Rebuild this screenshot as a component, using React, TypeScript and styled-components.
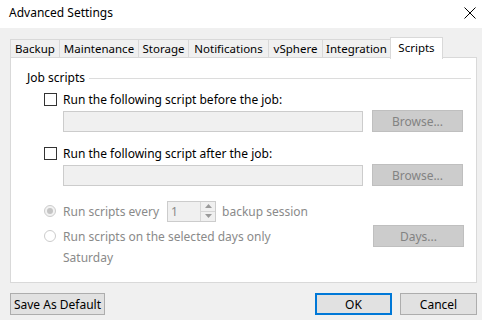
import * as React from "react";
import styled, { createGlobalStyle } from "styled-components";

const GlobalStyle = createGlobalStyle`
    html, body {
        margin: 0;
        padding: 0;
        background: #f0f0f0;
    }
    body {
        font-family: "Noto Sans", "Open Sans", sans-serif;
        font-size: 12px;
        color: #000;
    }
`

const Window = styled.div`
    width: 482px;
    height: 320px;
    display: flex;
    flex-direction: column;
    background: #f0f0f0;
    overflow: hidden;
`

const TitleBar = styled.div`
    height: 28px;
    flex: none;
    background: #fff;
    display: flex;
    align-items: center;
    justify-content: space-between;
    padding: 0 6px 3px 9px;
    box-sizing: border-box;
`

const Title = styled.div`
    font-size: 12px;
`

const CloseIcon = () => (
    <svg width="12" height="12" viewBox="0 0 12 12">
        <path d="M0.5 0.5 L11.5 11.5 M11.5 0.5 L0.5 11.5" stroke="#000" strokeWidth="1" />
    </svg>
)

const Body = styled.div`
    flex: 1;
    display: flex;
    flex-direction: column;
    padding: 9px 5px 0 10px;
`

const TabStrip = styled.div`
    display: flex;
    align-items: flex-end;
    height: 21px;
    padding-left: 1px;
    position: relative;
    z-index: 1;
    font-size: 11.5px;
`

const Tab = styled.div<{ $w: number; $active?: boolean }>`
    width: ${p => p.$w}px;
    height: ${p => (p.$active ? 22 : 19)}px;
    box-sizing: border-box;
    display: flex;
    align-items: center;
    justify-content: center;
    padding-bottom: ${p => (p.$active ? 3 : 0)}px;
    background: ${p => (p.$active ? "#fff" : "#f0f0f0")};
    border: 1px solid #d9d9d9;
    border-bottom: ${p => (p.$active ? "none" : "1px solid #d9d9d9")};
    margin-left: -1px;
    margin-bottom: ${p => (p.$active ? -1 : 0)}px;
    white-space: nowrap;
`

const Panel = styled.div`
    height: 226px;
    box-sizing: border-box;
    background: #fff;
    border: 1px solid #d9d9d9;
    margin-top: -1px;
    padding-top: 11px;
    display: flex;
    flex-direction: column;
`

const GroupHeader = styled.div`
    height: 16px;
    display: flex;
    align-items: center;
    padding-left: 16px;
    padding-right: 5px;
    gap: 4px;
`

const GroupLine = styled.div`
    flex: 1;
    height: 1px;
    background: #dcdcdc;
    margin-top: 2px;
`

const Rows = styled.div`
    padding-left: 33px;
    display: flex;
    flex-direction: column;
`

const Row = styled.div<{ $top: number; $h?: number; $indent?: number }>`
    display: flex;
    align-items: center;
    height: ${p => p.$h ?? 16}px;
    margin-top: ${p => p.$top}px;
    padding-left: ${p => p.$indent ?? 0}px;
`

const CheckBox = styled.div`
    width: 13px;
    height: 13px;
    box-sizing: border-box;
    border: 1px solid #333;
    background: #fff;
    margin-right: 6px;
    flex: none;
`

const Radio = styled.div<{ $checked?: boolean }>`
    width: 12px;
    height: 12px;
    box-sizing: border-box;
    border-radius: 50%;
    border: 1px solid #cccccc;
    background: ${p => (p.$checked ? "#f2f2f2" : "#fff")};
    margin-right: 7px;
    flex: none;
    display: flex;
    align-items: center;
    justify-content: center;

    &::after {
        content: "";
        display: ${p => (p.$checked ? "block" : "none")};
        width: 6px;
        height: 6px;
        border-radius: 50%;
        background: #c4c4c4;
    }
`

const Label = styled.span<{ $disabled?: boolean }>`
    color: ${p => (p.$disabled ? "#8a8a8a" : "#000")};
    white-space: nowrap;
`

const TextField = styled.div`
    width: 300px;
    height: 21px;
    box-sizing: border-box;
    margin-left: 19px;
    background: #f0f0f0;
    border: 1px solid #cccccc;
`

const DisabledButton = styled.div<{ $push?: boolean }>`
    width: 91px;
    height: 22px;
    box-sizing: border-box;
    margin-left: ${p => (p.$push ? "auto" : "9px")};
    margin-right: ${p => (p.$push ? "12px" : "0")};
    background: #cccccc;
    border: 1px solid #bfbfbf;
    color: #838383;
    display: flex;
    align-items: center;
    justify-content: center;
`

const SpinBox = styled.div`
    width: 49px;
    height: 21px;
    box-sizing: border-box;
    margin: 0 6px 0 8px;
    border: 1px solid #cccccc;
    background: #f0f0f0;
    display: flex;
    color: #8a8a8a;
`

const SpinValue = styled.div`
    flex: 1;
    padding-left: 3px;
    display: flex;
    align-items: center;
`

const SpinArrows = styled.div`
    width: 14px;
    display: flex;
    flex-direction: column;
    border-left: 1px solid #d6d6d6;
`

const SpinHalf = styled.div<{ $down?: boolean }>`
    flex: 1;
    display: flex;
    align-items: center;
    justify-content: center;
    border-top: ${p => (p.$down ? "1px solid #d6d6d6" : "none")};
`

const Arrow = ({ down }: { down?: boolean }) => (
    <svg width="7" height="4" viewBox="0 0 7 4">
        <path d={down ? "M0 0 L7 0 L3.5 4 Z" : "M0 4 L7 4 L3.5 0 Z"} fill="#9a9a9a" />
    </svg>
)

const Footer = styled.div`
    display: flex;
    align-items: center;
    margin-top: 10px;
`

const Button = styled.div<{ $w: number; $primary?: boolean; $left?: number }>`
    width: ${p => p.$w}px;
    height: 22px;
    box-sizing: border-box;
    margin-left: ${p => p.$left ?? 0}px;
    background: #e1e1e1;
    border: ${p => (p.$primary ? "2px solid #0078d7" : "1px solid #adadad")};
    display: flex;
    align-items: center;
    justify-content: center;
    white-space: nowrap;
`

const tabs: [string, number][] = [
    ["Backup", 50],
    ["Maintenance", 80],
    ["Storage", 51],
    ["Notifications", 81],
    ["vSphere", 55],
    ["Integration", 69],
    ["Scripts", 53],
]

export default function App() {
    return (
        <Window>
            <GlobalStyle />
            <TitleBar>
                <Title>Advanced Settings</Title>
                <CloseIcon />
            </TitleBar>
            <Body>
                <TabStrip>
                    {tabs.map(([name, w]) => (
                        <Tab key={name} $w={w} $active={name === "Scripts"}>{name}</Tab>
                    ))}
                </TabStrip>
                <Panel>
                    <GroupHeader>
                        <span>Job scripts</span>
                        <GroupLine />
                    </GroupHeader>
                    <Rows>
                        <Row $top={6}>
                            <CheckBox />
                            <Label>Run the following script before the job:</Label>
                        </Row>
                        <Row $top={3} $h={22}>
                            <TextField />
                            <DisabledButton>Browse...</DisabledButton>
                        </Row>
                        <Row $top={13}>
                            <CheckBox />
                            <Label>Run the following script after the job:</Label>
                        </Row>
                        <Row $top={3} $h={22}>
                            <TextField />
                            <DisabledButton>Browse...</DisabledButton>
                        </Row>
                        <Row $top={14} $h={22}>
                            <Radio $checked />
                            <Label $disabled>Run scripts every</Label>
                            <SpinBox>
                                <SpinValue>1</SpinValue>
                                <SpinArrows>
                                    <SpinHalf><Arrow /></SpinHalf>
                                    <SpinHalf $down><Arrow down /></SpinHalf>
                                </SpinArrows>
                            </SpinBox>
                            <Label $disabled>backup session</Label>
                        </Row>
                        <Row $top={3} $h={22}>
                            <Radio />
                            <Label $disabled>Run scripts on the selected days only</Label>
                            <DisabledButton $push>Days...</DisabledButton>
                        </Row>
                        <Row $top={2} $indent={19}>
                            <Label $disabled>Saturday</Label>
                        </Row>
                    </Rows>
                </Panel>
                <Footer>
                    <Button $w={95}>Save As Default</Button>
                    <Button $w={77} $primary $left={210}>OK</Button>
                    <Button $w={77} $left={8}>Cancel</Button>
                </Footer>
            </Body>
        </Window>
    )
}
